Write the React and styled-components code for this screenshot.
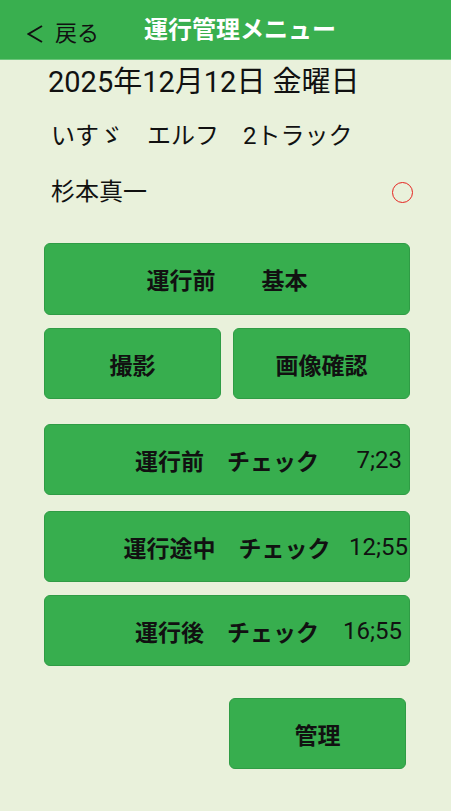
import React from "react";
import styled, { createGlobalStyle } from "styled-components";

const GlobalStyle = createGlobalStyle`
  html, body {
    margin: 0;
    padding: 0;
    background: #e9f1db;
  }
  body {
    font-family: Roboto, "Noto Sans CJK JP", sans-serif;
    color: #111;
  }
`;

const Screen = styled.div`
  width: 451px;
  min-height: 811px;
  display: flex;
  flex-direction: column;
`;

const Header = styled.header`
  height: 60px;
  box-sizing: border-box;
  background: #39af4f;
  border-bottom: 1px solid #6cc57b;
  display: flex;
  align-items: center;
  padding-left: 27px;
`;

const BackButton = styled.button`
  display: flex;
  align-items: center;
  gap: 12px;
  padding: 0;
  margin-top: 8px;
  border: 0;
  background: none;
  color: #111;
  font-family: inherit;
  font-size: 22px;
  line-height: 1;
`;

const Title = styled.h1`
  margin: 0 0 0 45px;
  color: #fff;
  font-size: 24px;
  font-weight: 700;
  line-height: 1;
`;

const Body = styled.main`
  display: flex;
  flex-direction: column;
  padding: 0 41px 0 44px;
`;

const DateLine = styled.div`
  margin-top: 4px;
  padding-left: 4px;
  font-size: 29px;
  line-height: 36px;
`;

const InfoRow = styled.div`
  margin-top: ${(p) => p.$top}px;
  padding-left: 7px;
  display: flex;
  align-items: center;
  justify-content: space-between;
  font-size: 24px;
  line-height: 32px;
`;

const StatusMark = styled.span`
  width: 19px;
  height: 19px;
  border: 1.5px solid #e5231f;
  border-radius: 50%;
  margin-right: -3px;
`;

const Button = styled.button`
  box-sizing: border-box;
  height: ${(p) => p.$h || 71}px;
  margin-top: ${(p) => p.$top || 0}px;
  padding: 0;
  border: 1px solid #2f9c45;
  border-radius: 6px;
  background: #37ae4e;
  color: #111;
  font-family: inherit;
  font-size: 23px;
  font-weight: 700;
  display: flex;
  align-items: center;
  justify-content: center;
`;

const PairRow = styled.div`
  margin-top: 13px;
  display: grid;
  grid-template-columns: 1fr 1fr;
  gap: 12px;
`;

const CheckButton = styled(Button)`
  display: grid;
  grid-template-columns: 1fr auto 1fr;
  align-items: center;
`;

const CheckLabel = styled.span`
  grid-column: 2;
`;

const CheckTime = styled.span`
  grid-column: 3;
  justify-self: end;
  padding-right: ${(p) => p.$pad}px;
  font-weight: 400;
  font-size: 24px;
`;

const ManageButton = styled(Button)`
  width: 177px;
  align-self: flex-end;
  margin-right: 4px;
`;

const checks = [
  { label: "運行前　チェック", time: "7;23", top: 25, pad: 7 },
  { label: "運行途中　チェック", time: "12;55", top: 16, pad: 1 },
  { label: "運行後　チェック", time: "16;55", top: 13, pad: 7 },
];

export default function App() {
  return (
    <Screen>
      <GlobalStyle />
      <Header>
        <BackButton>
          <svg width="16" height="18" viewBox="0 0 16 18">
            <polyline points="15,1 1.5,9 15,17" fill="none" stroke="#111" strokeWidth="2" />
          </svg>
          戻る
        </BackButton>
        <Title>運行管理メニュー</Title>
      </Header>
      <Body>
        <DateLine>2025年12月12日 金曜日</DateLine>
        <InfoRow $top={20}>いすゞ　エルフ　2トラック</InfoRow>
        <InfoRow $top={24}>
          杉本真一
          <StatusMark />
        </InfoRow>
        <Button $h={72} $top={35}>運行前　　基本</Button>
        <PairRow>
          <Button>撮影</Button>
          <Button>画像確認</Button>
        </PairRow>
        {checks.map((c) => (
          <CheckButton key={c.label} $top={c.top}>
            <CheckLabel>{c.label}</CheckLabel>
            <CheckTime $pad={c.pad}>{c.time}</CheckTime>
          </CheckButton>
        ))}
        <ManageButton $top={32}>管理</ManageButton>
      </Body>
    </Screen>
  );
}
